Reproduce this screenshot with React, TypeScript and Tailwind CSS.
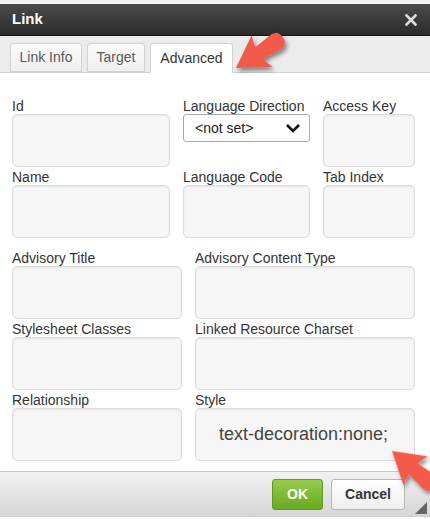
import type { ReactNode } from "react";

const inputBox =
  "h-[53px] rounded-[5px] border border-[#dcdcdc] bg-[#f6f6f6] shadow-[inset_0_1px_2px_rgba(0,0,0,0.07)]";

function Field({ label, children }: { label: string; children?: ReactNode }) {
  return (
    <div className="flex flex-col">
      <label className="h-[16px] text-[14px] leading-[17px] text-[#333] whitespace-nowrap">{label}</label>
      {children ?? <div className={inputBox} />}
    </div>
  );
}

function Tab({ label, active }: { label: string; active?: boolean }) {
  return (
    <div
      className={
        active
          ? "h-[30px] -mb-px px-[9.5px] flex items-center rounded-t-[3px] border border-[#d1d1d1] border-b-white bg-white text-[14px] text-[#333]"
          : "h-[29px] px-[8.5px] flex items-center rounded-t-[3px] border border-[#d1d1d1] bg-gradient-to-b from-[#fafafa] to-[#f0f0f0] text-[14px] text-[#595959]"
      }
    >
      {label}
    </div>
  );
}

function Arrow({ x, y, angle }: { x: number; y: number; angle: number }) {
  return (
    <g transform={`translate(${x} ${y}) rotate(${angle})`}>
      <path
        d="M0 0 L-31 -19 Q-28 -11 -28 -7 L-48 -9 Q-56 -9 -56 0 Q-56 9 -48 9 L-28 7 Q-28 11 -31 19 Z"
        fill="#f25a4a"
      />
    </g>
  );
}

export default function App() {
  return (
    <div className="relative w-[430px] h-[519px] overflow-hidden bg-white font-['Liberation_Sans',Arial,sans-serif]">
      <div className="h-[4px] bg-[#f3f3f3]" />
      {/* title bar */}
      <div className="h-[32px] flex items-center justify-between pl-[12px] pr-[13px] bg-gradient-to-b from-[#4b4b4b] to-[#2b2b2b] border-b border-[#141414]">
        <span className="text-[15px] font-bold text-white">Link</span>
        <svg width="12" height="12" viewBox="0 0 12 12">
          <path d="M1.5 1.5 L10.5 10.5 M10.5 1.5 L1.5 10.5" stroke="#dedede" strokeWidth="2.6" strokeLinecap="square" />
        </svg>
      </div>

      {/* tabs */}
      <div className="h-[37px] flex items-end gap-[5px] pl-[10px] bg-[#ebebeb] border-b border-[#d1d1d1]">
        <Tab label="Link Info" />
        <Tab label="Target" />
        <Tab label="Advanced" active />
      </div>

      {/* body */}
      <div className="h-[398px] px-[12px] pt-[25px]">
        <div className="grid grid-cols-[158px_127px_92px] gap-x-[13px] gap-y-[2px]">
          <Field label="Id" />
          <Field label="Language Direction">
            <div className="h-[28px] flex items-center justify-between pl-[11px] pr-[8px] rounded-[3px] border border-[#aaa] bg-white text-[14px] text-[#222]">
              <span>&lt;not set&gt;</span>
              <svg width="16" height="10" viewBox="0 0 16 10">
                <path d="M2 2 L8 8 L14 2" fill="none" stroke="#111" strokeWidth="2.6" />
              </svg>
            </div>
          </Field>
          <Field label="Access Key" />
          <Field label="Name" />
          <Field label="Language Code" />
          <Field label="Tab Index" />
        </div>
        <div className="mt-[12px] grid grid-cols-[170px_220px] gap-x-[13px] gap-y-[2px]">
          <Field label="Advisory Title" />
          <Field label="Advisory Content Type" />
          <Field label="Stylesheet Classes" />
          <Field label="Linked Resource Charset" />
          <Field label="Relationship" />
          <Field label="Style">
            <div className={inputBox + " flex items-center pl-[23px] text-[18px] text-[#444]"}>
              text-decoration:none;
            </div>
          </Field>
        </div>
      </div>

      {/* footer */}
      <div className="h-[46px] flex items-center justify-end gap-[8px] pr-[25px] bg-gradient-to-b from-[#f2f2f2] to-[#d6d6d6] border-t border-[#c9c9c9] border-b border-b-[#cfcfcf]">
        <button className="h-[31px] w-[51px] rounded-[3px] border border-[#5e9a1c] bg-gradient-to-b from-[#96cc4c] to-[#69a81f] text-[14px] font-bold text-white">
          OK
        </button>
        <button className="h-[31px] w-[74px] rounded-[3px] border border-[#b5b5b5] bg-gradient-to-b from-white to-[#efefef] text-[14px] font-bold text-[#333]">
          Cancel
        </button>
      </div>

      {/* resize grip */}
      <svg className="absolute right-[3px] bottom-[5px]" width="12" height="12" viewBox="0 0 12 12">
        <path d="M12 0 L12 12 L0 12 Z" fill="#666" />
      </svg>

      {/* annotation arrows */}
      <svg className="absolute inset-0 pointer-events-none" width="430" height="519">
        <defs>
          <filter id="sh" x="-30%" y="-30%" width="160%" height="160%">
            <feDropShadow dx="2" dy="3" stdDeviation="2" floodColor="#000" floodOpacity="0.45" />
          </filter>
        </defs>
        <g filter="url(#sh)">
          <Arrow x={236} y={68} angle={147} />
          <Arrow x={392} y={451} angle={-140} />
        </g>
      </svg>
    </div>
  );
}
